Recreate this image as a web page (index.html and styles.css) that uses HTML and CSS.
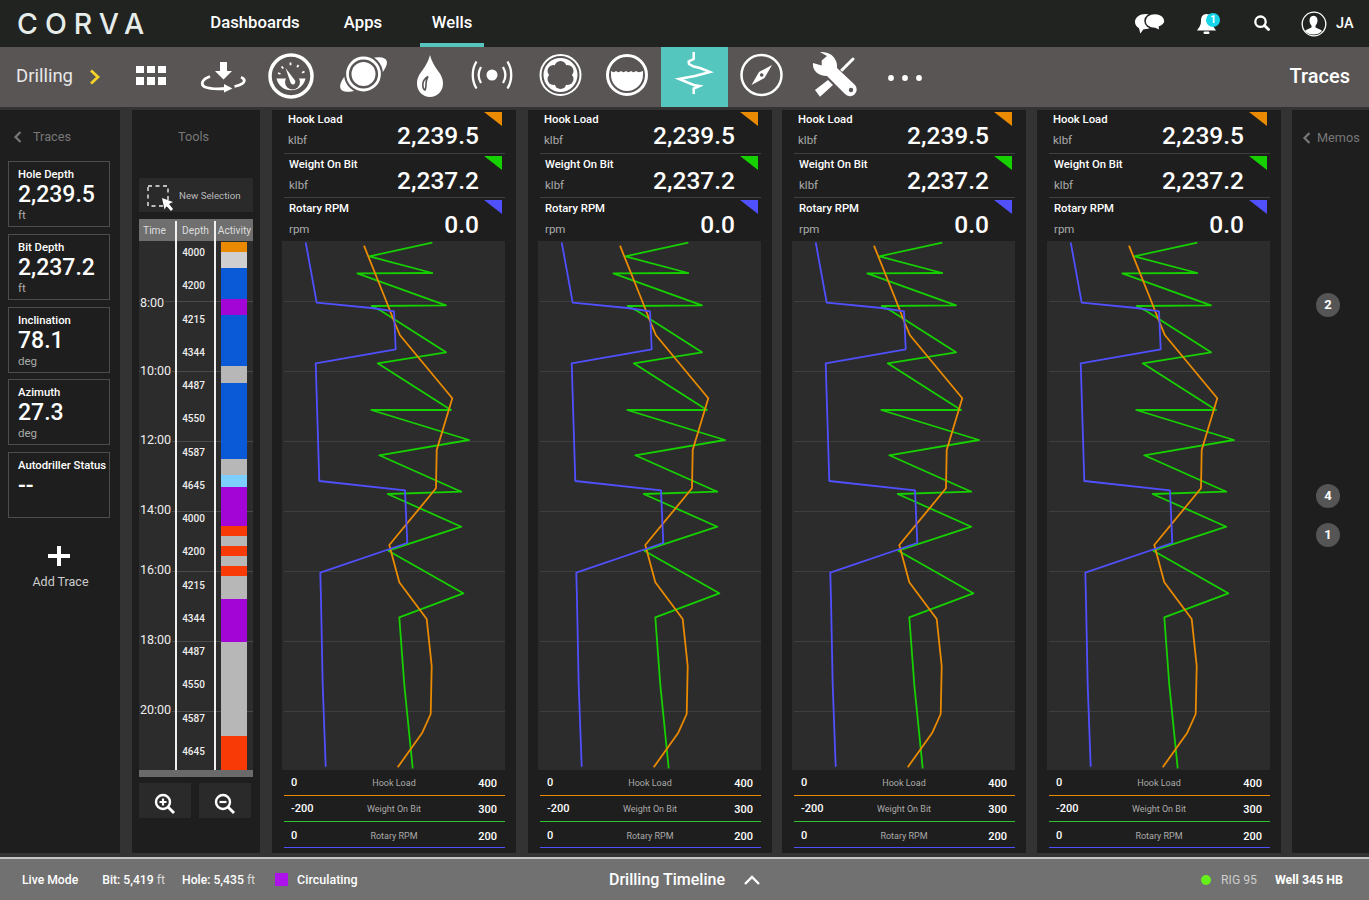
FILE: index.html
```html
<!DOCTYPE html>
<html lang="en">
<head>
    <meta charset="UTF-8">
    <meta name="viewport" content="width=device-width, initial-scale=1.0">
    <title>Corva - Traces</title>
    <link rel="stylesheet" href="styles.css">
</head>
<body>
    <svg class="svg-defs" width="0" height="0">
        <symbol id="traces" viewBox="0 0 223 529">
            <g fill="none" stroke="#3f3f3f" stroke-width="1">
                <path d="M2 60.500H223M2 130.500H223M2 200.500H223M2 270.500H223M2 330.500H223M2 400.500H223M2 470.500H223"/>
            </g>
            <g fill="none" stroke-width="1.800" stroke-linejoin="round">
                <polyline stroke="#16d000" points="150.3,1.7 87.3,15.3 150.3,32 75.3,32.3 164,64.3 89.7,65 99.7,70.3 164,111.3 95.7,122.3 169,169 89.3,169 187,199 97.3,214.3 179.3,250.7 105.7,253 179.3,285.7 106.3,309.7 181.3,352.3 117.3,376.3 122.3,444 130.7,527.3"/>
                <polyline stroke="#ea8a00" points="82,4.7 103,57 112,80 118,94.3 170.3,157.3 154.7,209 154,247.3 107.3,304 117.3,341.3 144.7,378 149.7,425 148.7,473 140.3,491.7 115.7,526.3"/>
                <polyline stroke="#5050ff" points="23.7,1.3 34.7,61.7 89.7,67 112,70.3 113.7,108.3 33.7,122.3 37.3,240 123,249.3 125.3,302 38.3,331.7 39,359 40.7,444 43.7,525.7"/>
            </g>
        </symbol>
    </svg>

    <header class="topbar">
        <div class="logo">CORVA</div>
        <nav class="main-nav">
            <a class="nav-link nav-dash">Dashboards</a>
            <a class="nav-link nav-apps">Apps</a>
            <a class="nav-link nav-wells active">Wells</a>
        </nav>
        <div class="top-actions">
            <svg class="chat-icon" width="32" height="22" viewBox="1134 12 32 22">
                <path fill="#fff" d="M1146 13c-6.500 0-11 3.500-11 8 0 2.700 1.600 4.800 4 6.200l1.300 5.300 3.200-4.300c5 .4 12-3.200 12-7.200 0-4.500-4-8-9.500-8z"/>
                <path fill="#fff" stroke="#212321" stroke-width="1.500" d="M1155 12.500c-6 0-10 3.200-10 7.500s4 7.500 10 7.500l5 2.200-.6-3.700c3-1.300 5.600-3.500 5.600-6 0-4.300-4.500-7.500-10-7.500z"/>
            </svg>
            <div class="bell">
                <svg width="20" height="22" viewBox="1196 12 20 22">
                    <path fill="#fff" d="M1206.500 13c-4 0-5.500 3-5.500 7 0 4-1.500 6-4 9.500h19c-2.500-3.500-4-5.500-4-9.500 0-4-1.500-7-5.500-7z"/>
                    <rect x="1203.500" y="30.500" width="6" height="2.500" rx="1.200" fill="#fff"/>
                </svg>
                <span class="bell-badge">1</span>
            </div>
            <svg class="search-icon" width="17" height="17" viewBox="1253 15 17 17">
                <circle cx="1260.500" cy="21.700" r="5.200" fill="none" stroke="#fff" stroke-width="2.300"/>
                <path d="M1264.500 25.500l4 4" stroke="#fff" stroke-width="2.800" stroke-linecap="round"/>
            </svg>
            <svg class="user-icon" width="26" height="26" viewBox="1301 10 26 26">
                <circle cx="1314" cy="23" r="11.800" fill="#212321" stroke="#fff" stroke-width="1.300"/>
                <path fill="#fff" d="M1314 14.500c-3 0-4.500 2.200-4.500 5 0 2 .8 3.800 2 5v2l-5.500 2.500c-.5.300-.8.700-.9 1.200 2 2 5 3.300 8.400 3.300s6.400-1.300 8.400-3.300c-.1-.5-.4-.9-.9-1.200l-5.500-2.500v-2c1.200-1.200 2-3 2-5 0-2.800-1.500-5-4.500-5z"/>
            </svg>
            <span class="initials">JA</span>
        </div>
    </header>

    <div class="toolbar">
        <div class="crumb">
            <span>Drilling</span>
            <svg width="11" height="16" viewBox="0 0 11 16"><path d="M1 1.500L8 8l-7 6.500" fill="none" stroke="#f5d327" stroke-width="2.800"/></svg>
        </div>
        <div class="tool">
            <svg width="67" height="60" viewBox="125 47 67 60" fill="#fff">
                <path d="M136 66h8v7h-8zM147 66h8v7h-8zM158 66h8v7h-8zM136 77h8v8h-8zM147 77h8v8h-8zM158 77h8v8h-8z"/>
            </svg>
        </div>
        <div class="tool">
            <svg width="67" height="60" viewBox="192 47 67 60">
                <path fill="#fff" d="M220 62h7v9h5l-8.500 8.500-8.500-8.500h5z"/>
                <path fill="none" stroke="#fff" stroke-width="2.800" d="M210 76.500c-8 2.500-10 8-5 10.500 5 2 12 2.200 21 1.500"/>
                <path fill="#fff" d="M224 84l8.500 4.500-8.500 4z"/>
                <path fill="none" stroke="#fff" stroke-width="2.800" d="M234.500 86.500c6.500-1.300 11-4 9.500-7-.5-.9-1.500-1.600-3-2.200"/>
            </svg>
        </div>
        <div class="tool">
            <svg width="67" height="60" viewBox="259 47 67 60">
                <circle cx="291" cy="76" r="21" fill="none" stroke="#fff" stroke-width="3.500"/>
                <path fill="#fff" d="M276.500 78.500h29a14.800 14.800 0 0 1-29 0z"/>
                <circle cx="292.500" cy="82" r="7.500" fill="#5a5555"/>
                <path fill="#fff" d="M285.500 68l9.500 12.500c.6 1.200.3 3-.9 3.700-1.200.7-2.900.2-3.400-1.100z"/>
                <path fill="none" stroke="#fff" stroke-width="1.800" d="M278 73l2.500 1M281.500 66.500l1.800 2M290.500 62.500v2.800M298.500 65l-1.300 2.300M304.500 71.500l-2.500 1.300"/>
            </svg>
        </div>
        <div class="tool">
            <svg width="67" height="60" viewBox="326 47 67 60">
                <ellipse cx="363.500" cy="74.500" rx="27" ry="11" transform="rotate(-33 363.500 74.500)" fill="#fff"/>
                <circle cx="363.500" cy="74" r="19.500" fill="#5a5555"/>
                <circle cx="363.500" cy="74" r="16" fill="none" stroke="#fff" stroke-width="2.800"/>
                <circle cx="363.500" cy="74" r="12" fill="#fff"/>
            </svg>
        </div>
        <div class="tool">
            <svg width="67" height="60" viewBox="393 47 67 60">
                <path fill="#fff" d="M430 55c1.500 6 4 10 7 14.500 3 4 6 8 6 14 0 8-6 13.500-13 13.500s-13-5.500-13-13.500c0-6 3-10 6-14 3-4.500 5.500-8.500 7-14.500z"/>
                <path fill="none" stroke="#5a5555" stroke-width="1.600" d="M425 90c-2-1-2.500-3.500-2-7 .5-3 2.500-5 5-6.500-1.500 2.500-2 5-2 7.500 0 2 .2 4-1 6z"/>
            </svg>
        </div>
        <div class="tool">
            <svg width="67" height="60" viewBox="460 47 67 60">
                <circle cx="492" cy="75" r="5.500" fill="#fff"/>
                <path fill="none" stroke="#fff" stroke-width="2.300" d="M481 67c-3 5-3 11 0 16M503 67c3 5 3 11 0 16M476.500 61.500c-5 8-5 19 0 27M507.500 61.500c5 8 5 19 0 27"/>
            </svg>
        </div>
        <div class="tool">
            <svg width="67" height="60" viewBox="527 47 67 60">
                <circle cx="560.500" cy="75" r="20" fill="none" stroke="#fff" stroke-width="2"/>
                <circle cx="560.500" cy="75" r="17" fill="#fff"/>
                <g fill="#5a5555">
                    <circle cx="560.500" cy="75" r="9"/>
                    <circle cx="560.500" cy="67" r="6"/>
                    <circle cx="567.500" cy="71" r="6"/>
                    <circle cx="567.500" cy="79" r="6"/>
                    <circle cx="560.500" cy="83" r="6"/>
                    <circle cx="553.500" cy="79" r="6"/>
                    <circle cx="553.500" cy="71" r="6"/>
                </g>
            </svg>
        </div>
        <div class="tool">
            <svg width="67" height="60" viewBox="594 47 67 60">
                <circle cx="627" cy="75" r="19.500" fill="none" stroke="#fff" stroke-width="3"/>
                <path fill="#fff" d="M611 71c2 1.500 3.500 1.500 5 0 1.500 1.500 3.500 1.500 5 0 1.500 1.500 3.500 1.500 5 0 1.500 1.500 3.500 1.500 5 0 1.500 1.500 3.500 1.500 5 0 1.500 1.500 4 1.500 7 0v4a16 16 0 0 1-32 0z"/>
            </svg>
        </div>
        <div class="tool tool-active">
            <svg width="67" height="60" viewBox="661 47 67 60">
                <polyline fill="none" stroke="#fff" stroke-width="2.500" points="693.700,52 693.700,59 688.700,61.500 689,64 693.700,66.500 700,68 710,72 695,76 679,79 693.700,85 699.500,86 693.700,88.500 693.700,94"/>
            </svg>
        </div>
        <div class="tool">
            <svg width="67" height="60" viewBox="728 47 67 60">
                <circle cx="761.500" cy="75" r="20" fill="none" stroke="#fff" stroke-width="2.500"/>
                <path fill="#fff" d="M772 65l-7.500 13-13 7 7.500-13z"/>
                <circle cx="761.700" cy="75" r="1.800" fill="#5a5555"/>
            </svg>
        </div>
        <div class="tool">
            <svg width="67" height="60" viewBox="795 47 67 60">
                <path stroke="#fff" stroke-width="3" stroke-linecap="round" d="M853 59l-13 13"/>
                <path fill="#fff" d="M815 90l5 6.700L833 85l-5-5z"/>
                <path fill="#fff" stroke="#5a5555" stroke-width="1.500" paint-order="stroke" d="M813 63C812 70 818 76 827 76L845 94A6.500 6.500 0 0 0 855 85L837 68C838 60 832 51 820 52L827 56 821.700 60.500 821.700 65.500z"/>
                <circle cx="851" cy="90" r="2.200" fill="#5a5555"/>
            </svg>
        </div>
        <div class="tool tool-more">
            <svg width="67" height="60" viewBox="862 47 67 60" fill="#fff">
                <circle cx="891" cy="78" r="2.900"/>
                <circle cx="905" cy="78" r="2.900"/>
                <circle cx="919" cy="78" r="2.900"/>
            </svg>
        </div>
        <div class="page-title">Traces</div>
    </div>

    <main class="content">
        <aside class="panel traces-panel">
            <div class="panel-title with-back">
                <svg class="back" width="9" height="12" viewBox="0 0 9 12"><path d="M7.500 1L2.500 6l5 5" fill="none" stroke="#777" stroke-width="2.200"/></svg>
                <span>Traces</span>
            </div>
            <div class="card">
                <div class="card-label">Hole Depth</div>
                <div class="card-value">2,239.5</div>
                <div class="card-unit">ft</div>
            </div>
            <div class="card">
                <div class="card-label">Bit Depth</div>
                <div class="card-value">2,237.2</div>
                <div class="card-unit">ft</div>
            </div>
            <div class="card">
                <div class="card-label">Inclination</div>
                <div class="card-value">78.1</div>
                <div class="card-unit">deg</div>
            </div>
            <div class="card">
                <div class="card-label">Azimuth</div>
                <div class="card-value">27.3</div>
                <div class="card-unit">deg</div>
            </div>
            <div class="card">
                <div class="card-label">Autodriller Status</div>
                <div class="card-value">--</div>
            </div>
            <div class="add-trace">
                <svg width="22" height="20" viewBox="0 0 22 20"><path d="M0 10h22M11 0v20" stroke="#fff" stroke-width="4"/></svg>
                <span>Add Trace</span>
            </div>
        </aside>

        <aside class="panel tools-panel">
            <div class="panel-title">Tools</div>
            <div class="new-selection">
                <svg width="27" height="26" viewBox="0 0 27 26">
                    <rect x="1" y="1" width="20" height="20" fill="none" stroke="#eee" stroke-width="1.400" stroke-dasharray="4 3.500"/>
                    <path fill="#fff" d="M15 13l11 4-4 2 4 5-2 2-4.500-5-2 3.500z"/>
                </svg>
                <span>New Selection</span>
            </div>
            <div class="timeline">
                <div class="time-axis">
                    <div class="time-row" style="height: 61px"><span>8:00</span></div>
                    <div class="time-row" style="height: 70px"><span>10:00</span></div>
                    <div class="time-row" style="height: 70px"><span>12:00</span></div>
                    <div class="time-row" style="height: 70px"><span>14:00</span></div>
                    <div class="time-row" style="height: 60px"><span>16:00</span></div>
                    <div class="time-row" style="height: 70px"><span>18:00</span></div>
                    <div class="time-row" style="height: 70px"><span>20:00</span></div>
                </div>
                <div class="col col-time"><div class="col-head">Time</div></div>
                <div class="col col-depth">
                    <div class="col-head">Depth</div>
                    <div class="depth-list">
                        <span>4000</span><span>4200</span><span>4215</span><span>4344</span>
                        <span>4487</span><span>4550</span><span>4587</span><span>4645</span>
                        <span>4000</span><span>4200</span><span>4215</span><span>4344</span>
                        <span>4487</span><span>4550</span><span>4587</span><span>4645</span>
                    </div>
                </div>
                <div class="col col-activity">
                    <div class="col-head">Activity</div>
                    <div class="activity-bar">
                        <div class="seg orange" style="height: 10px"></div>
                        <div class="seg silver" style="height: 16px"></div>
                        <div class="seg blue" style="height: 31px"></div>
                        <div class="seg purple" style="height: 16px"></div>
                        <div class="seg blue" style="height: 51px"></div>
                        <div class="seg grey" style="height: 17px"></div>
                        <div class="seg blue" style="height: 76px"></div>
                        <div class="seg grey" style="height: 16px"></div>
                        <div class="seg sky" style="height: 12px"></div>
                        <div class="seg purple" style="height: 39px"></div>
                        <div class="seg red" style="height: 10px"></div>
                        <div class="seg grey" style="height: 10px"></div>
                        <div class="seg red" style="height: 10px"></div>
                        <div class="seg grey" style="height: 10px"></div>
                        <div class="seg red" style="height: 10px"></div>
                        <div class="seg grey" style="height: 23px"></div>
                        <div class="seg purple" style="height: 43px"></div>
                        <div class="seg grey" style="height: 94px"></div>
                        <div class="seg red" style="height: 34px"></div>
                    </div>
                </div>
            </div>
            <div class="zoom-buttons">
                <button class="zoom-btn">
                    <svg width="22" height="22" viewBox="0 0 22 22">
                        <circle cx="9" cy="9" r="7" fill="none" stroke="#fff" stroke-width="2.400"/>
                        <path d="M5.500 9h7M9 5.500v7" stroke="#fff" stroke-width="2.200"/>
                        <path d="M14 14l6 6" stroke="#fff" stroke-width="2.800"/>
                    </svg>
                </button>
                <button class="zoom-btn">
                    <svg width="22" height="22" viewBox="0 0 22 22">
                        <circle cx="9" cy="9" r="7" fill="none" stroke="#fff" stroke-width="2.400"/>
                        <path d="M5.500 9h7" stroke="#fff" stroke-width="2.200"/>
                        <path d="M14 14l6 6" stroke="#fff" stroke-width="2.800"/>
                    </svg>
                </button>
            </div>
        </aside>

        <section class="panel chart">
            <div class="stat">
                <div class="stat-label">Hook Load</div>
                <div class="stat-unit">klbf</div>
                <div class="stat-value">2,239.5</div>
                <i class="flag flag-orange"></i>
            </div>
            <div class="stat">
                <div class="stat-label">Weight On Bit</div>
                <div class="stat-unit">klbf</div>
                <div class="stat-value">2,237.2</div>
                <i class="flag flag-green"></i>
            </div>
            <div class="stat">
                <div class="stat-label">Rotary RPM</div>
                <div class="stat-unit">rpm</div>
                <div class="stat-value">0.0</div>
                <i class="flag flag-blue"></i>
            </div>
            <svg class="plot" width="223" height="529"><use href="#traces"/></svg>
            <div class="scale scale-orange"><b>0</b><span>Hook Load</span><b>400</b></div>
            <div class="scale scale-green"><b>-200</b><span>Weight On Bit</span><b>300</b></div>
            <div class="scale scale-blue"><b>0</b><span>Rotary RPM</span><b>200</b></div>
        </section>

        <section class="panel chart">
            <div class="stat">
                <div class="stat-label">Hook Load</div>
                <div class="stat-unit">klbf</div>
                <div class="stat-value">2,239.5</div>
                <i class="flag flag-orange"></i>
            </div>
            <div class="stat">
                <div class="stat-label">Weight On Bit</div>
                <div class="stat-unit">klbf</div>
                <div class="stat-value">2,237.2</div>
                <i class="flag flag-green"></i>
            </div>
            <div class="stat">
                <div class="stat-label">Rotary RPM</div>
                <div class="stat-unit">rpm</div>
                <div class="stat-value">0.0</div>
                <i class="flag flag-blue"></i>
            </div>
            <svg class="plot" width="223" height="529"><use href="#traces"/></svg>
            <div class="scale scale-orange"><b>0</b><span>Hook Load</span><b>400</b></div>
            <div class="scale scale-green"><b>-200</b><span>Weight On Bit</span><b>300</b></div>
            <div class="scale scale-blue"><b>0</b><span>Rotary RPM</span><b>200</b></div>
        </section>

        <section class="panel chart">
            <div class="stat">
                <div class="stat-label">Hook Load</div>
                <div class="stat-unit">klbf</div>
                <div class="stat-value">2,239.5</div>
                <i class="flag flag-orange"></i>
            </div>
            <div class="stat">
                <div class="stat-label">Weight On Bit</div>
                <div class="stat-unit">klbf</div>
                <div class="stat-value">2,237.2</div>
                <i class="flag flag-green"></i>
            </div>
            <div class="stat">
                <div class="stat-label">Rotary RPM</div>
                <div class="stat-unit">rpm</div>
                <div class="stat-value">0.0</div>
                <i class="flag flag-blue"></i>
            </div>
            <svg class="plot" width="223" height="529"><use href="#traces"/></svg>
            <div class="scale scale-orange"><b>0</b><span>Hook Load</span><b>400</b></div>
            <div class="scale scale-green"><b>-200</b><span>Weight On Bit</span><b>300</b></div>
            <div class="scale scale-blue"><b>0</b><span>Rotary RPM</span><b>200</b></div>
        </section>

        <section class="panel chart">
            <div class="stat">
                <div class="stat-label">Hook Load</div>
                <div class="stat-unit">klbf</div>
                <div class="stat-value">2,239.5</div>
                <i class="flag flag-orange"></i>
            </div>
            <div class="stat">
                <div class="stat-label">Weight On Bit</div>
                <div class="stat-unit">klbf</div>
                <div class="stat-value">2,237.2</div>
                <i class="flag flag-green"></i>
            </div>
            <div class="stat">
                <div class="stat-label">Rotary RPM</div>
                <div class="stat-unit">rpm</div>
                <div class="stat-value">0.0</div>
                <i class="flag flag-blue"></i>
            </div>
            <svg class="plot" width="223" height="529"><use href="#traces"/></svg>
            <div class="scale scale-orange"><b>0</b><span>Hook Load</span><b>400</b></div>
            <div class="scale scale-green"><b>-200</b><span>Weight On Bit</span><b>300</b></div>
            <div class="scale scale-blue"><b>0</b><span>Rotary RPM</span><b>200</b></div>
        </section>

        <aside class="panel memos-panel">
            <div class="panel-title with-back">
                <svg class="back" width="9" height="12" viewBox="0 0 9 12"><path d="M7.500 1L2.500 6l5 5" fill="none" stroke="#777" stroke-width="2.200"/></svg>
                <span>Memos</span>
            </div>
            <div class="memo memo-2">2</div>
            <div class="memo memo-4">4</div>
            <div class="memo memo-1">1</div>
        </aside>
    </main>

    <footer class="statusbar">
        <div class="status-left">
            <span class="live">Live Mode</span>
            <span class="pos"><b>Bit: 5,419</b> ft</span>
            <span class="pos"><b>Hole: 5,435</b> ft</span>
            <i class="activity-swatch"></i>
            <span class="activity-name">Circulating</span>
        </div>
        <div class="status-center">
            <span>Drilling Timeline</span>
            <svg width="16" height="10" viewBox="0 0 16 10"><path d="M1 9l7-7 7 7" fill="none" stroke="#fff" stroke-width="2.400"/></svg>
        </div>
        <div class="status-right">
            <i class="rig-dot"></i>
            <span class="rig">RIG 95</span>
            <span class="well">Well 345 HB</span>
        </div>
    </footer>
</body>
</html>
```

FILE: styles.css
```css
* {
    box-sizing: border-box;
}

body {
    margin: 0;
    width: 1369px;
    height: 900px;
    overflow: hidden;
    background: #333;
    color: #fff;
    font-family: Roboto, "Open Sans", sans-serif;
}

.svg-defs {
    display: none;
}

/* top bar */
.topbar {
    height: 47px;
    background: #212321;
    display: flex;
    align-items: center;
}

.logo {
    width: 193px;
    padding-left: 17px;
    font-family: Inter, sans-serif;
    font-size: 28.500px;
    font-weight: 500;
    letter-spacing: 7px;
    color: #e6ece9;
}

.main-nav {
    display: flex;
    height: 47px;
}

.nav-link {
    height: 47px;
    padding-top: 13px;
    font-size: 16.700px;
    line-height: 20px;
    font-weight: 500;
    text-align: center;
}

.nav-dash {
    width: 124px;
}

.nav-apps {
    width: 92px;
    margin-right: 11px;
}

.nav-wells {
    width: 64px;
}

.nav-link.active {
    border-bottom: 4px solid #55c6bd;
}

.top-actions {
    margin-left: auto;
    display: flex;
    align-items: center;
    padding-right: 16px;
}

.chat-icon {
    margin-right: 30px;
}

.bell {
    position: relative;
    width: 20px;
    height: 22px;
    margin-right: 37px;
}

.bell-badge {
    position: absolute;
    left: 10px;
    top: 0;
    width: 14px;
    height: 14px;
    border-radius: 50%;
    background: #16d4ea;
    font-size: 10px;
    font-weight: 700;
    line-height: 14px;
    text-align: center;
}

.search-icon {
    margin-right: 31px;
}

.user-icon {
    margin-right: 9px;
}

.initials {
    width: 17px;
    font-size: 14.500px;
    font-weight: 500;
    white-space: nowrap;
}

/* tool strip */
.toolbar {
    height: 60px;
    background: #5a5555;
    display: flex;
    align-items: center;
}

.crumb {
    width: 125px;
    padding: 0 0 3px 16px;
    display: flex;
    align-items: center;
    gap: 17px;
    font-size: 18.500px;
    color: #e8e8e8;
}

.crumb svg {
    margin-top: 3px;
}

.tool {
    width: 67px;
    height: 60px;
}

.tool svg {
    display: block;
}

.tool-active {
    background: #55c6bd;
}

.page-title {
    margin-left: auto;
    padding: 0 19px 2px 0;
    font-size: 20px;
    font-weight: 500;
}

/* panels */
.content {
    display: flex;
    gap: 11px;
    height: 750px;
    padding-top: 3px;
    padding-bottom: 4px;
}

.panel {
    background: #1e1e1e;
    flex: none;
}

.panel-title {
    height: 18px;
    margin-top: 18px;
    font-size: 12.700px;
    line-height: 18px;
    color: #777;
    text-align: center;
}

.with-back {
    display: flex;
    align-items: center;
}

.traces-panel {
    width: 120px;
    margin-right: 1px;
}

.traces-panel .with-back {
    gap: 11px;
    padding-left: 13px;
    margin-top: 0;
    padding-top: 18px;
    height: 36px;
    margin-bottom: 15px;
}

.card {
    width: 102px;
    height: 66px;
    margin: 0 0 7px 8px;
    padding: 6px 0 0 9px;
    border: 1px solid #4d4d4d;
}

.card:nth-child(4) {
    margin-bottom: 6px;
}

.card-label {
    font-size: 11.300px;
    line-height: 14px;
    font-weight: 500;
    white-space: nowrap;
}

.card-value {
    font-size: 23px;
    line-height: 25px;
    font-weight: 500;
}

.card-unit {
    font-size: 11.500px;
    line-height: 16px;
    color: #aaa;
}

.add-trace {
    margin-top: 28px;
    margin-left: -2px;
    display: flex;
    flex-direction: column;
    align-items: center;
    gap: 8px;
    font-size: 12.500px;
    color: #ccc;
}

.add-trace span {
    margin-left: 3px;
}

.tools-panel {
    width: 128px;
    margin-right: 1px;
    padding: 0 7px;
    overflow: hidden;
}

.tools-panel .panel-title {
    margin-right: 5px;
}

.new-selection {
    height: 34px;
    margin-top: 32px;
    padding-left: 8px;
    background: #2a2a2a;
    display: flex;
    align-items: center;
    gap: 5px;
    font-size: 9.700px;
    color: #bbb;
}

.new-selection svg {
    margin-top: 5px;
}

.timeline {
    position: relative;
    height: 551px;
    margin-top: 7px;
    display: flex;
    background: linear-gradient(#6f6f6f 0 22px, #2c2c2c 22px);
}

.time-axis {
    position: absolute;
    top: 22px;
    left: 0;
    right: 0;
}

.time-row {
    border-bottom: 1px solid #4a4a4a;
    position: relative;
}

.time-row span {
    position: absolute;
    left: 1px;
    bottom: -6px;
    padding-right: 1px;
    background: #2c2c2c;
    font-size: 12.500px;
    line-height: 15px;
    color: #eee;
}

.time-row:first-child span {
    bottom: -9px;
}

.time-row:nth-child(2) span {
    bottom: -7px;
}

.col {
    position: relative;
    z-index: 1;
}

.col-head {
    height: 22px;
    font-size: 10.200px;
    line-height: 23px;
    color: #ddd;
    text-align: center;
}

.col-time {
    width: 36px;
    padding-right: 5px;
}

.col-depth {
    width: 41px;
    height: 549px;
    margin-top: 2px;
    padding-right: 4px;
    border-left: 2px solid #f0f0f0;
    border-right: 2px solid #f0f0f0;
}

.col-depth .col-head {
    height: 20px;
    margin-right: -4px;
    line-height: 19px;
}

.depth-list {
    display: flex;
    flex-direction: column;
    margin-top: -5px;
}

.depth-list span {
    height: 33.270px;
    font-size: 10px;
    font-weight: 500;
    line-height: 33px;
    text-align: center;
    color: #eee;
}

.col-activity {
    width: 37px;
}

.activity-bar {
    width: 26px;
    margin-left: 5px;
    padding-top: 1px;
}

.seg.orange { background: #ea8a00; }
.seg.silver { background: #cfcfcf; }
.seg.blue { background: #0a5ad8; }
.seg.purple { background: #a305d6; }
.seg.grey { background: #b7b7b7; }
.seg.sky { background: #7ccfff; }
.seg.red { background: #f83a06; }

.timeline::after {
    content: "";
    position: absolute;
    left: 0;
    right: 0;
    bottom: -7px;
    height: 7px;
    background: #6a6a6a;
}

.zoom-buttons {
    display: flex;
    gap: 8px;
    margin-top: 13px;
}

.zoom-btn {
    width: 52px;
    height: 35px;
    padding: 0;
    border: none;
    background: #2a2a2a;
}

.zoom-btn svg {
    display: block;
    margin: 6px auto 0;
}

/* trace charts */
.chart {
    width: 244px;
    padding-left: 10px;
}

.chart:nth-of-type(1) {
    margin-right: 1px;
}

.chart:nth-of-type(2) {
    margin-right: -1px;
}

.stat {
    position: relative;
    height: 44px;
    margin: 0 11px 0 2px;
    padding: 1px 26px 0 4px;
    display: grid;
    grid-template-columns: 1fr auto;
    grid-template-rows: 18px 22px;
    border-bottom: 1px solid #3f3f3f;
}

.stat + .stat {
    padding-top: 2px;
    padding-left: 5px;
}

.stat:nth-child(3) {
    height: 43px;
    border-bottom: none;
}

.stat-label {
    grid-column: 1 / 3;
    font-size: 11.300px;
    line-height: 18px;
    font-weight: 500;
}

.stat-unit {
    font-size: 11.500px;
    line-height: 22px;
    color: #aaa;
}

.stat-value {
    margin-top: -6px;
    font-size: 24.500px;
    line-height: 26px;
    font-weight: 500;
    text-align: right;
}

.flag {
    position: absolute;
    right: 3px;
    top: 2px;
    width: 18px;
    height: 14px;
    clip-path: polygon(0 0, 100% 0, 100% 100%);
}

.flag-orange { background: #ea8a00; }
.flag-green { background: #16d000; }
.flag-blue { background: #5050ff; }

.plot {
    display: block;
    background: #2c2c2c;
}

.scale {
    width: 221px;
    height: 26px;
    margin-left: 2px;
    padding: 0 8px 0 7px;
    display: grid;
    grid-template-columns: 40px 1fr 40px;
    align-items: center;
    border-bottom: 1px solid;
}

.scale b {
    font-size: 11px;
    font-weight: 500;
}

.scale b:last-child {
    margin-top: 2px;
    text-align: right;
}

.scale span {
    font-size: 9px;
    color: #aaa;
    text-align: center;
}

.scale-orange { border-color: #ea8a00; }
.scale-green { border-color: #2fc42f; }
.scale-blue { border-color: #5050ff; padding-top: 2px; }

/* memos */
.memos-panel {
    position: relative;
    width: 77px;
}

.memos-panel .with-back {
    gap: 6px;
    padding-left: 10px;
    margin-top: 19px;
}

.memo {
    position: absolute;
    left: 24px;
    width: 24px;
    height: 24px;
    border-radius: 50%;
    background: #555;
    font-size: 13px;
    font-weight: 700;
    line-height: 23px;
    text-align: center;
}

.memo-2 { top: 183px; }
.memo-4 { top: 374px; }
.memo-1 { top: 413px; }

/* status bar */
.statusbar {
    height: 43px;
    background: #717171;
    border-top: 2px solid #c4c4c4;
    display: flex;
    align-items: center;
    font-size: 12.200px;
}

.status-left {
    width: 609px;
    padding-left: 22px;
    display: flex;
    align-items: center;
}

.live {
    font-weight: 500;
    margin-right: 24px;
}

.pos {
    color: #d8d8d8;
    margin-right: 17px;
}

.pos b {
    color: #fff;
    font-weight: 500;
}

.activity-swatch {
    width: 13px;
    height: 13px;
    margin: 0 9px 0 3px;
    background: #ad12ea;
}

.activity-name {
    font-size: 12.500px;
    font-weight: 500;
}

.status-center {
    display: flex;
    align-items: center;
    gap: 19px;
    font-size: 16px;
    font-weight: 500;
}

.status-right {
    margin-left: auto;
    padding-right: 26px;
    display: flex;
    align-items: center;
}

.rig-dot {
    width: 10px;
    height: 10px;
    margin-right: 10px;
    border-radius: 50%;
    background: #66f01a;
}

.rig {
    color: #ccc;
    margin-right: 18px;
}

.well {
    font-size: 12.400px;
    font-weight: 700;
}
```
